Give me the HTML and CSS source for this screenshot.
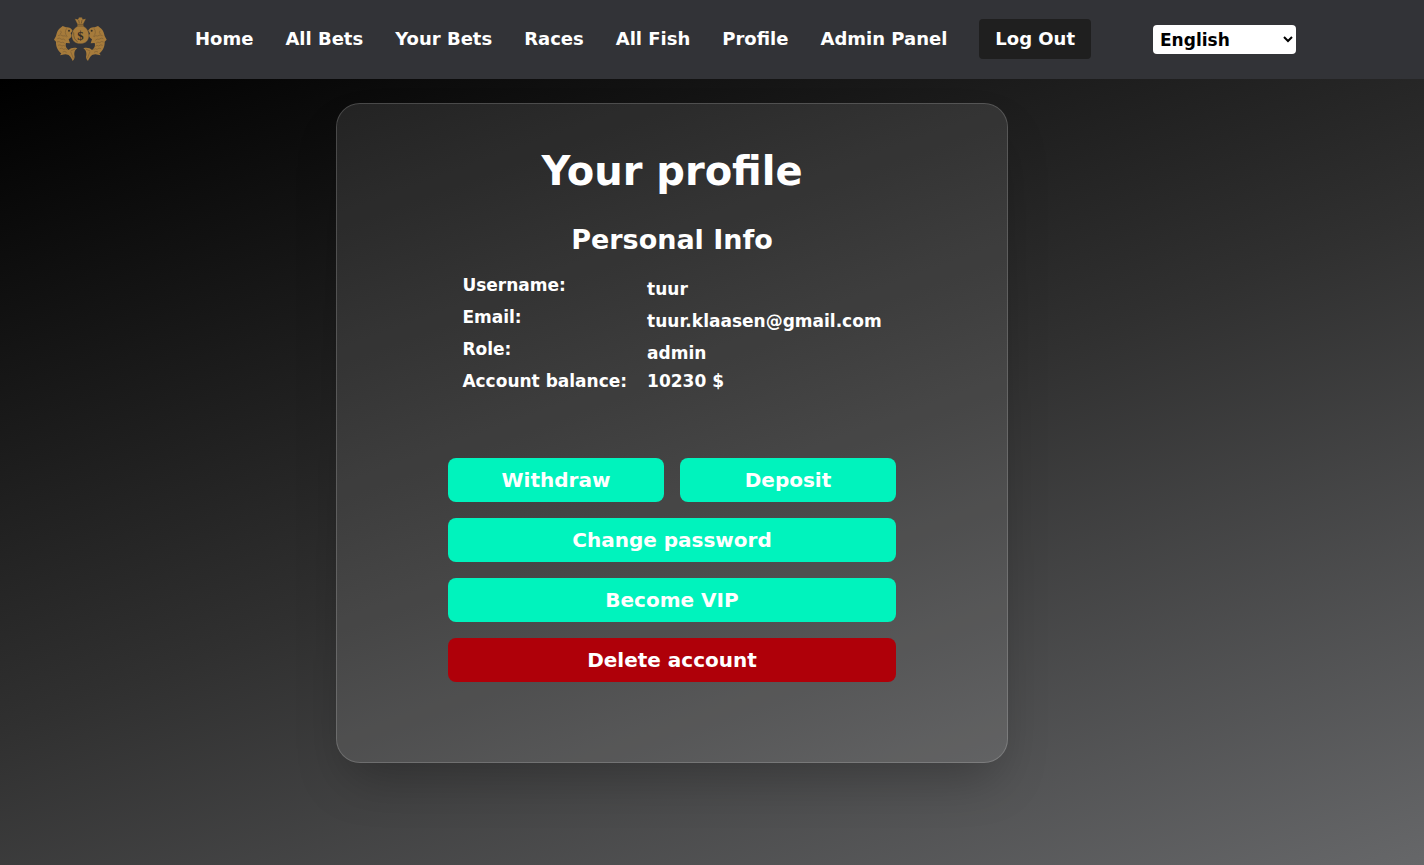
FILE: index.html
```html
<!DOCTYPE html>
<html lang="en">
<head>
<meta charset="utf-8">
<meta name="viewport" content="width=device-width, initial-scale=1">
<title>Your profile</title>
<link rel="stylesheet" href="styles.css">
</head>
<body>
<header class="header">
  <a class="logo" href="#" aria-label="Home">
    <svg class="logo-image" viewBox="42 36 159 135" aria-hidden="true">
      <defs>
        <g id="fish">
          <path fill="#a67b3b" d="M98 77C94 69 86 66 78 67L68 63L58 71C52 76 50 84 48 93L42 104L48 110C47 124 54 138 64 145L60 151L76 148C82 149 85 149 88 152C92 156 96 162 98 168C104 162 105 156 103 150C102 142 105 134 112 130C102 127 92 129 86 135C80 131 75 124 78 114L90 115L86 103C92 99 96 95 95 90L92 85Z"/>
          <path fill="none" stroke="#7c5e33" stroke-width="2" d="M80 70Q71 83 82 95M54 92Q62 87 69 93Q76 90 80 96M52 101Q58 97 65 103Q71 100 76 106M51 111Q57 107 63 113Q69 109 74 115M54 121Q60 117 66 123Q71 119 76 124M59 131Q65 127 71 133Q76 129 82 134M68 141Q74 137 80 142M62 77Q66 83 61 87M92 140L100 160M92 138L105 132"/>
          <circle cx="87" cy="77" r="3" fill="#3b3325"/>
        </g>
      </defs>
      <use href="#fish"/>
      <use href="#fish" transform="translate(242 0) scale(-1 1)"/>
      <path fill="#a67b3b" stroke="#323337" stroke-width="1" d="M104 41L114 43L117 37L126 37L128 43L138 41L130 57L131 64C142 70 147 80 147 92C146 108 136 116 121 116C106 116 96 108 95 92C96 79 101 70 112 64L112 57Z"/>
      <path fill="none" stroke="#5c482b" stroke-width="2" d="M113 58H130M112 63H131M116 45L118 55M126 45L124 55M101 82Q100 104 113 110"/>
      <text class="logo-dollar" x="121" y="104" text-anchor="middle">$</text>
    </svg>
  </a>
  <nav class="nav">
    <a href="#">Home</a>
    <a href="#">All Bets</a>
    <a href="#">Your Bets</a>
    <a href="#">Races</a>
    <a href="#">All Fish</a>
    <a href="#">Profile</a>
    <a href="#">Admin Panel</a>
    <button class="logout" type="button">Log Out</button>
  </nav>
  <select class="language" aria-label="Language">
    <option selected>English</option>
  </select>
</header>
<main class="main">
  <section class="card">
    <h1 class="title">Your profile</h1>
    <h2 class="subtitle">Personal Info</h2>
    <dl class="info">
      <dt>Username:</dt><dd>tuur</dd>
      <dt>Email:</dt><dd>tuur.klaasen@gmail.com</dd>
      <dt>Role:</dt><dd>admin</dd>
      <dt>Account balance:</dt><dd class="balance">10230 $</dd>
    </dl>
    <div class="actions">
      <button class="button" type="button">Withdraw</button>
      <button class="button" type="button">Deposit</button>
      <button class="button wide" type="button">Change password</button>
      <button class="button wide" type="button">Become VIP</button>
      <button class="button wide danger" type="button">Delete account</button>
    </div>
  </section>
</main>
</body>
</html>
```
FILE: styles.css
```css
* { box-sizing: border-box; }

body {
  display: flex;
  flex-direction: column;
  margin: 0;
  min-height: 100vh;
  color: #fff;
  font: bold 17px/24px "DejaVu Sans", sans-serif;
}

button, select { font: inherit; }

.header {
  display: flex;
  align-items: center;
  min-height: 79px;
  padding: 16px 128px 16px 54px;
  background: #323337;
}

.logo { display: flex; }
.logo-image { width: 53px; height: 45px; }
.logo-dollar { font: bold 38px "Liberation Serif", serif; fill: #302c27; }

.nav {
  display: flex;
  align-items: center;
  gap: 32px;
  margin: 0 0 2px 88px;
  font-size: 18px;
  white-space: nowrap;
}

.nav a { color: inherit; text-decoration: none; }

.logout {
  padding: 8px 16px;
  border: 0;
  border-radius: 4px;
  background: #1f1f1f;
  color: #fff;
}

.language {
  width: 143px;
  height: 29px;
  margin-left: auto;
  padding: 0 0 0 3px;
  border: 0;
  border-radius: 4px;
  background: #fff;
  color: #000;
}

.main {
  flex: 1;
  padding: 24px 80px 24px 0;
  background: linear-gradient(160deg, #000000, #303030 50%, #666769);
}

.card {
  max-width: 672px;
  margin: 0 auto;
  padding: 43px 48px 80px;
  border: 1px solid rgba(255, 255, 255, 0.25);
  border-radius: 24px;
  background: rgba(255, 255, 255, 0.1);
  background-clip: padding-box;
  box-shadow: 0 25px 50px -12px rgba(0, 0, 0, 0.25);
}

.title {
  margin: 0 0 27px;
  font-size: 40px;
  line-height: 48px;
  text-align: center;
}

.subtitle {
  margin: 0 0 15px;
  font-size: 27px;
  line-height: 36px;
  text-align: center;
}

.info {
  display: grid;
  grid-template-columns: auto auto;
  grid-auto-rows: 32px;
  column-gap: 20px;
  justify-content: center;
  margin: 0 0 57px;
}

.info dd { margin: 0; padding-top: 4px; }
.info .balance { padding-top: 0; }

.actions {
  display: grid;
  grid-template-columns: 1fr 1fr;
  gap: 16px;
  max-width: 448px;
  margin: 0 auto;
}

.button {
  padding: 8px 16px;
  border: 0;
  border-radius: 8px;
  background: #00f3bd;
  color: #fff;
  font-size: 20px;
  line-height: 28px;
}

.wide { grid-column: span 2; }
.danger { background: #af0009; }
```
